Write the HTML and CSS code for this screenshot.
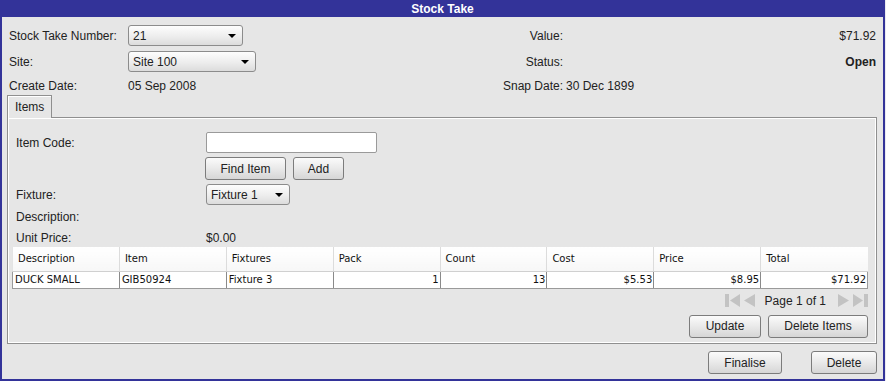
FILE: index.html
```html
<!DOCTYPE html>
<html>
<head>
<meta charset="utf-8">
<link rel="stylesheet" href="styles.css">
</head>
<body>
<div class="window">
  <div class="titlebar">Stock Take</div>
  <div class="content">
    <div class="info">
      <div class="lbl">Stock Take Number:</div>
      <div><div class="select sel-num"><span>21</span><span class="caret"></span></div></div>
      <div class="rlbl">Value:</div>
      <div class="rval">$71.92</div>

      <div class="lbl">Site:</div>
      <div><div class="select sel-site"><span>Site 100</span><span class="caret"></span></div></div>
      <div class="rlbl">Status:</div>
      <div class="rval bold">Open</div>

      <div class="lbl">Create Date:</div>
      <div class="val">05 Sep 2008</div>
      <div class="rlbl">Snap Date:</div>
      <div class="lval">30 Dec 1899</div>
    </div>

    <div class="tabs"><div class="tab">Items</div></div>
    <div class="panel">
      <div class="frow r-code">
        <div class="flabel">Item Code:</div>
        <div class="input"></div>
      </div>
      <div class="frow r-btns">
        <div class="flabel"></div>
        <button class="btn w-find">Find Item</button>
        <button class="btn w-add">Add</button>
      </div>
      <div class="frow r-fix">
        <div class="flabel">Fixture:</div>
        <div class="select sel-fix"><span>Fixture 1</span><span class="caret"></span></div>
      </div>
      <div class="frow r-desc">
        <div class="flabel">Description:</div>
      </div>
      <div class="frow r-price">
        <div class="flabel">Unit Price:</div>
        <div>$0.00</div>
      </div>

      <div class="tablewrap">
        <table class="grid">
          <thead>
            <tr>
              <th>Description</th><th>Item</th><th>Fixtures</th><th>Pack</th><th>Count</th><th>Cost</th><th>Price</th><th>Total</th>
            </tr>
          </thead>
          <tbody>
            <tr>
              <td>DUCK SMALL</td><td>GIB50924</td><td>Fixture 3</td><td class="num">1</td><td class="num">13</td><td class="num">$5.53</td><td class="num">$8.95</td><td class="num">$71.92</td>
            </tr>
          </tbody>
        </table>
      </div>

      <div class="pager">
        <svg class="pico" width="15" height="13" viewBox="0 0 15 13"><rect x="0" y="0" width="4" height="13"/><polygon points="15,0 15,13 5,6.5"/></svg>
        <svg class="pico" width="13" height="13" viewBox="0 0 13 13"><polygon points="12,0 12,13 1,6.5"/></svg>
        <span class="ptext">Page 1 of 1</span>
        <svg class="pico" width="13" height="13" viewBox="0 0 13 13"><polygon points="1,0 1,13 12,6.5"/></svg>
        <svg class="pico" width="15" height="13" viewBox="0 0 15 13"><polygon points="0,0 0,13 10,6.5"/><rect x="11" y="0" width="4" height="13"/></svg>
      </div>

      <div class="pbtns">
        <button class="btn w-upd">Update</button>
        <button class="btn w-deli">Delete Items</button>
      </div>
    </div>

    <div class="footer">
      <button class="btn w-fin">Finalise</button>
      <button class="btn w-del">Delete</button>
    </div>
  </div>
</div>
</body>
</html>
```

FILE: styles.css
```css
* { box-sizing: border-box; }
html, body { margin: 0; padding: 0; }
body {
  background: #ebebf0;
  font-family: "Liberation Sans", Arial, sans-serif;
  font-size: 12px;
  color: #222;
}
.window {
  width: 885px;
  height: 381px;
  border: 2px solid #333399;
  border-top: 0;
  background: #e6e6e6;
  display: flex;
  flex-direction: column;
}
.titlebar {
  height: 17px;
  margin: 0 -2px;
  background: #333399;
  color: #fff;
  font-weight: bold;
  text-align: center;
  line-height: 18px;
}
.content {
  flex: 1;
  display: flex;
  flex-direction: column;
}
.info {
  display: grid;
  grid-template-columns: 119px 310px 125px 313px;
  grid-template-rows: 21px 21px 18px;
  row-gap: 5px;
  padding: 8px 0 0 7px;
  align-items: center;
}
.rlbl { text-align: right; }
.rval { text-align: right; }
.lval { padding-left: 3px; }
.bold { font-weight: bold; }

.select {
  height: 21px;
  border: 1px solid #8c8c8c;
  border-radius: 3px;
  background: linear-gradient(#fdfdfd, #ededed 55%, #dcdcdc);
  display: flex;
  align-items: center;
  justify-content: space-between;
  padding: 0 6px 0 4px;
}
.sel-num { width: 115px; }
.sel-site { width: 128px; }
.sel-fix { width: 84px; }
.caret {
  width: 0;
  height: 0;
  border-left: 4px solid transparent;
  border-right: 4px solid transparent;
  border-top: 4px solid #000;
}

.tabs {
  display: flex;
  padding-left: 5px;
  margin-top: 0;
  position: relative;
  z-index: 1;
}
.tab {
  width: 45px;
  height: 23px;
  border: 1px solid #8f8f8f;
  border-bottom: 0;
  background: #e6e6e6;
  box-shadow: inset 1px 1px 0 #fff;
  padding-left: 7px;
  line-height: 22px;
  margin-bottom: -1px;
}

.panel {
  margin: 0 6px 0 5px;
  height: 227px;
  border: 1px solid #8f8f8f;
  box-shadow: inset 0 0 0 1px #fff;
  padding: 14px 7px 0 4px;
  display: flex;
  flex-direction: column;
}
.frow {
  display: flex;
  align-items: center;
  padding-left: 4px;
}
.flabel { width: 190px; flex: none; }
.r-code { height: 21px; }
.input {
  width: 171px;
  height: 21px;
  background: #fff;
  border: 1px solid #9a9a9a;
  border-radius: 2px;
}
.r-btns { height: 23px; margin-top: 4px; gap: 7px; }
.r-btns .flabel { width: 182px; }
.r-fix { height: 21px; margin-top: 4px; }
.r-desc { height: 20px; margin-top: 2px; }
.r-price { height: 19px; margin-top: 1px; }

.btn {
  height: 23px;
  border: 1px solid #7c7c7c;
  border-radius: 3px;
  background: linear-gradient(#fbfbfb, #e9e9e9 50%, #d6d6d6);
  padding: 0;
  font-family: inherit;
  font-size: 12px;
  color: #222;
  display: inline-flex;
  align-items: center;
  justify-content: center;
  margin: 0;
}
.w-find { width: 81px; }
.w-add { width: 51px; }
.w-upd { width: 72px; }
.w-deli { width: 100px; }
.w-fin { width: 74px; }
.w-del { width: 66px; }

.grid {
  width: 856px;
  border-collapse: collapse;
  table-layout: fixed;
  font-family: "DejaVu Sans", Verdana, sans-serif;
  font-size: 10px;
  color: #111;
}
.grid th {
  height: 24px;
  font-weight: normal;
  text-align: left;
  padding: 0 5px;
  background: linear-gradient(#ffffff, #f7f7f7);
  border-left: 1px solid #dcdcdc;
  border-bottom: 1px solid #d0d0d0;
}
.grid th:first-child { border-left: 1px solid #e4e4e4; }
.grid td {
  height: 17px;
  background: #fff;
  padding: 0 1px 0 2px;
  border-left: 1px solid #8a8a8a;
  border-bottom: 1px solid #9a9a9a;
  white-space: nowrap;
}
.grid td:first-child { border-left: 1px solid #9a9a9a; }
.grid td:last-child { border-right: 1px solid #9a9a9a; }
.grid td.num { text-align: right; }

.pager {
  height: 20px;
  margin-top: 2px;
  display: flex;
  align-items: center;
  justify-content: flex-end;
  gap: 3px;
  padding-right: 1px;
}
.pico { fill: #c3c3c3; flex: none; }
.ptext { margin: 0 8px 0 6px; }

.pbtns {
  display: flex;
  justify-content: flex-end;
  gap: 7px;
  margin-top: 4px;
  padding-right: 1px;
}

.footer {
  display: flex;
  justify-content: flex-end;
  gap: 29px;
  margin-top: 7px;
  padding-right: 6px;
}
```
